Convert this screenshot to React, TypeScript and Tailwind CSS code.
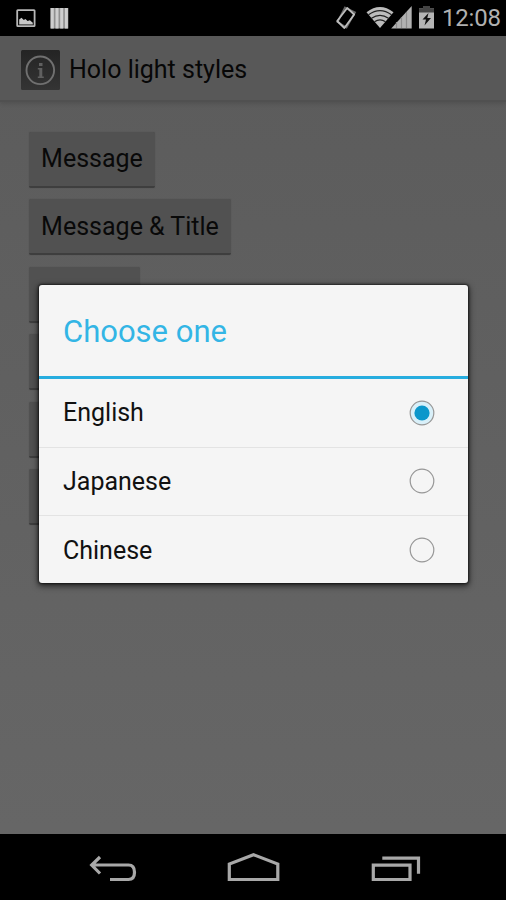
import React from 'react'

const buttons = [
  { label: 'Message', width: 'w-[126px]' },
  { label: 'Message & Title', width: 'w-[202px]' },
  { label: '', width: 'w-[111px]' },
  { label: '', width: 'w-[111px]' },
  { label: '', width: 'w-[111px]' },
  { label: '', width: 'w-[111px]' },
]

const options = ['English', 'Japanese', 'Chinese']

function StatusBar() {
  return (
    <div className="h-9 shrink-0 bg-black flex items-center justify-between pl-4 pr-2">
      <svg width="54" height="36" viewBox="16 0 54 36" fill="none">
        <rect x="17.2" y="10.2" width="17.4" height="16" rx="0.6" stroke="#b8b8b8" strokeWidth="1.8" />
        <path d="M19.2 24.5v-5l2.3-1.8 2.3 2.2 1.6-.9 2.2 2 2.3-.8 2.9 2.6v1.7z" fill="#c8c8c8" />
        <path d="M50.3 8h18v20.5h-18z" fill="#909090" />
        <path d="M52.3 8v20.5M57 8v20.5M61.7 8v20.5M66.4 8v20.5" stroke="#cfcfcf" strokeWidth="3" />
      </svg>
      <div className="flex items-center">
        <svg width="104" height="36" viewBox="334 0 104 36" fill="none">
          <path d="M345 7.5l10 5-8.5 15-9-5.5z" stroke="#666" strokeWidth="1.8" />
          <path d="M347.2 8l7 6.5-9.8 13.5-7.2-7z" stroke="#bdbdbd" strokeWidth="1.8" strokeLinejoin="round" />
          <path d="M366.5 12.2Q380 1.8 393.5 12.2L380 28z" fill="#bcbcbc" />
          <path d="M368.5 14.8q11.5-8.5 23 0M371.5 18.3q8.500-6 17 0M374.5 21.700q5.500-3.800 11 0" stroke="#202020" strokeWidth="1.2" />
          <path d="M411.700 6v22.500h-20.500z" fill="#b2b2b2" />
          <path d="M396.500 22v6M401.500 17v11M406.500 12v16" stroke="#8d8d8d" strokeWidth="1.200" />
          <path d="M423 6h7v2.500h4v20h-15v-20h4z" fill="#b5b5b5" />
          <path d="M423 6h7v2.500h4v4h-15v-4h4z" fill="#444" />
          <path d="M428.500 13l-6 6.500h3.500l-1.500 6 6.500-7.500h-3.700z" fill="#111" />
        </svg>
        <span className="w-[60px] pl-1 text-[24px] leading-9 tracking-[-0.2px] text-[#b0b0b0] whitespace-nowrap">12:08</span>
      </div>
    </div>
  )
}

function ActionBar() {
  return (
    <div className="h-[66px] shrink-0 bg-[#585858] border-b-2 border-[#505050] shadow-[0_2px_4px_rgba(0,0,0,0.12)] flex items-center pl-[21px] gap-[9px]">
      <svg width="39" height="40" viewBox="0 0 39 40" fill="none" className="mt-1">
        <defs>
          <linearGradient id="tile" x1="0" y1="0" x2="0" y2="1">
            <stop offset="0" stopColor="#242424" />
            <stop offset="1" stopColor="#343434" />
          </linearGradient>
        </defs>
        <rect width="39" height="40" rx="1.500" fill="url(#tile)" />
        <circle cx="19.300" cy="20.300" r="13.800" stroke="#707070" strokeWidth="1.900" />
        <path d="M18 13h3.500v3h-3.500zM16.800 18h4.500v8.500h1.500v1.500h-6v-1.500h1.500v-7h-1.500z" fill="#606060" />
      </svg>
      <h1 className="mt-1 text-[25px] text-[#070707] whitespace-nowrap">Holo light styles</h1>
    </div>
  )
}

function NavBar() {
  return (
    <div className="h-[66px] shrink-0 bg-black">
      <svg width="506" height="66" viewBox="0 834 506 66" fill="none" stroke="#a8a8a8" strokeWidth="3.200">
        <path d="M100 857l-8.300 8 8.300 8.500M92 865h36.500q6 0 6 7.200t-6 7.300H110" />
        <path d="M229.300 879.500v-15.500l24.200-9.300 24.300 9.300v15.500z" />
        <path d="M373.300 865.200h36.700v14.300h-36.700zM382.300 858.200h36.200v15.600" />
      </svg>
    </div>
  )
}

function Radio({ checked }: { checked: boolean }) {
  return (
    <svg width="26" height="26" viewBox="0 0 26 26" fill="none">
      <circle cx="13" cy="13" r="11.800" fill={checked ? '#d9f0f9' : '#f5f5f5'} stroke="#979797" strokeWidth="1.200" />
      {checked && <circle cx="13" cy="13" r="7.600" fill="#0c97cb" />}
    </svg>
  )
}

function ChoiceDialog() {
  return (
    <div className="absolute left-[39px] top-[285px] w-[429px] h-[298px] rounded-[3px] bg-[#f5f5f5] shadow-[0_2px_6px_1px_rgba(0,0,0,0.65),0_0_2px_1px_rgba(0,0,0,0.5)] flex flex-col overflow-hidden">
      <h2 className="h-[94px] shrink-0 border-b-[3px] border-[#27addf] px-6 pt-px text-[31px] leading-[91px] text-[#33b5e5]">Choose one</h2>
      <ul>
        {options.map((option, i) => (
          <li
            key={option}
            className="h-[68.500px] flex items-center justify-between pl-6 pr-[33px] border-b border-[#e3e3e3] last:border-0"
          >
            <span className="text-[25px] text-[#111]">{option}</span>
            <Radio checked={i === 0} />
          </li>
        ))}
      </ul>
    </div>
  )
}

export default function App() {
  return (
    <div className="relative w-[506px] h-[900px] flex flex-col overflow-hidden bg-linear-to-b from-[#5b5b5b] to-[#676767] font-[Roboto,sans-serif]">
      <StatusBar />
      <ActionBar />
      <div className="grow flex flex-col items-start gap-[11.400px] pl-[29px] pt-[30px]">
        {buttons.map((button, i) => (
          <div
            key={i}
            className={`${button.width} h-14 shrink-0 bg-[#515151] border-b-2 border-[#3e3e3e] rounded-[2px] shadow-[0_0_1px_#484848] flex items-center justify-center text-[25px] text-[#090909] whitespace-nowrap`}
          >
            {button.label}
          </div>
        ))}
      </div>
      <NavBar />
      <ChoiceDialog />
    </div>
  )
}
